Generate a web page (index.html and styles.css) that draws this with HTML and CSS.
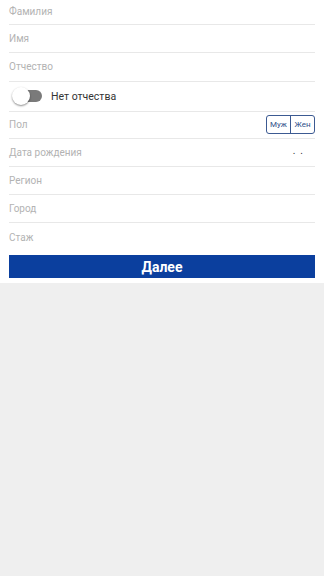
FILE: index.html
```
<!DOCTYPE html>
<html lang="ru">
<head>
<meta charset="utf-8">
<link rel="stylesheet" href="styles.css">
</head>
<body>
<div class="form">
  <div class="row first"><span class="label">Фамилия</span></div>
  <div class="row"><span class="label">Имя</span></div>
  <div class="row r29"><span class="label">Отчество</span></div>
  <div class="row toggle-row">
    <span class="switch"><span class="knob"></span></span>
    <span class="toggle-text">Нет отчества</span>
  </div>
  <div class="row r27">
    <span class="label">Пол</span>
    <span class="seg"><span class="seg-item">Муж</span><span class="seg-item">Жен</span></span>
  </div>
  <div class="row">
    <span class="label">Дата рождения</span>
    <span class="dots">.&nbsp;&nbsp;.</span>
  </div>
  <div class="row"><span class="label">Регион</span></div>
  <div class="row"><span class="label">Город</span></div>
  <div class="row last"><span class="label">Стаж</span></div>
  <div class="btn">Далее</div>
</div>
</body>
</html>
```
FILE: styles.css
```
html, body {
  margin: 0;
  padding: 0;
  background: #efefef;
  font-family: Roboto, "Liberation Sans", sans-serif;
}
.form {
  background: #ffffff;
  padding: 0 9px 5px 9px;
}
.row {
  height: 28px;
  box-sizing: border-box;
  border-bottom: 1px solid #e8e8e8;
  display: flex;
  align-items: center;
  justify-content: space-between;
  padding-bottom: 1px;
}
.row.first { height: 25px; padding-bottom: 2px; }
.row.r29 { height: 29px; }
.row.r27 { height: 27px; }
.row.toggle-row {
  height: 30px;
  justify-content: flex-start;
  padding-left: 6px;
}
.row.last { border-bottom: none; height: 32px; padding-bottom: 3px; }
.label {
  font-size: 10px;
  color: #b3b3b3;
}
.switch {
  position: relative;
  width: 27px;
  height: 12px;
  border-radius: 6px;
  background: #7a7a7a;
}
.knob {
  position: absolute;
  left: -3px;
  top: -3px;
  width: 18px;
  height: 18px;
  border-radius: 50%;
  background: #ffffff;
  box-shadow: 0 1px 2px rgba(0,0,0,0.45);
}
.toggle-text {
  margin-left: 9px;
  font-size: 10.5px;
  color: #333333;
}
.seg {
  display: flex;
  border: 1px solid #3c5a92;
  border-radius: 3px;
  height: 19px;
  box-sizing: border-box;
}
.seg-item {
  width: 23px;
  display: flex;
  align-items: center;
  justify-content: center;
  font-size: 8px;
  color: #2f4f8a;
}
.seg-item + .seg-item {
  border-left: 1px solid #3c5a92;
}
.dots {
  font-size: 10px;
  color: #333;
  margin-right: 12px;
  margin-bottom: 4px;
}
.btn {
  height: 23px;
  background: #0b3f9e;
  color: #ffffff;
  font-weight: bold;
  font-size: 14px;
  display: flex;
  align-items: center;
  justify-content: center;
}
```
